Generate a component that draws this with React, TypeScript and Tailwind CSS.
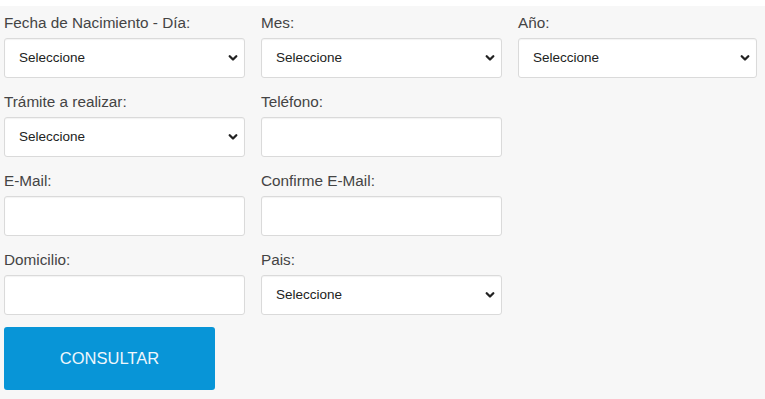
import React from "react";

const font = { fontFamily: '"Liberation Sans", Arial, sans-serif' };

function Chevron() {
  return (
    <svg width="10" height="7" viewBox="0 0 10 7" className="absolute right-[7px] top-1/2 -translate-y-1/2 pointer-events-none">
      <path d="M1.7 1.7 L5 5 L8.3 1.7" fill="none" stroke="#222" strokeWidth="2.3" strokeLinecap="round" strokeLinejoin="round" />
    </svg>
  );
}

function SelectField({ label }: { label: string }) {
  return (
    <div className="flex flex-col">
      <label className="text-[15.3px] leading-[20px] text-[#444] mb-[5px]">{label}</label>
      <div className="relative h-[40px]">
        <select
          className="appearance-none w-full h-full bg-white border border-[#dadada] rounded-[3px] pl-[14px] pr-[24px] text-[13.5px] text-[#222] shadow-[inset_0_1px_1px_rgba(0,0,0,0.05)] outline-none"
          style={font}
          defaultValue=""
        >
          <option value="">Seleccione</option>
        </select>
        <Chevron />
      </div>
    </div>
  );
}

function InputField({ label }: { label: string }) {
  return (
    <div className="flex flex-col">
      <label className="text-[15.3px] leading-[20px] text-[#444] mb-[5px]">{label}</label>
      <input
        type="text"
        className="w-full h-[40px] bg-white border border-[#dadada] rounded-[3px] px-[14px] text-[13.5px] shadow-[inset_0_1px_1px_rgba(0,0,0,0.05)] outline-none"
        style={font}
      />
    </div>
  );
}

export default function App() {
  return (
    <div className="w-[765px] h-[399px] bg-white overflow-hidden" style={font}>
      <div className="mt-[6px] h-[393px] bg-[#f7f7f7] pl-[4px] pt-[7px]">
        <div className="grid grid-cols-[241px_241px_239px] gap-x-[16px] gap-y-[14px]">
          <SelectField label="Fecha de Nacimiento - Día:" />
          <SelectField label="Mes:" />
          <SelectField label="Año:" />
          <SelectField label="Trámite a realizar:" />
          <InputField label="Teléfono:" />
          <div />
          <InputField label="E-Mail:" />
          <InputField label="Confirme E-Mail:" />
          <div />
          <InputField label="Domicilio:" />
          <SelectField label="Pais:" />
          <div />
        </div>
        <button
          className="mt-[12px] w-[211px] h-[63px] bg-[#0895d7] rounded-[3px] text-[16.5px] text-[#eef7fc] flex items-center justify-center"
          style={font}
        >
          CONSULTAR
        </button>
      </div>
    </div>
  );
}
